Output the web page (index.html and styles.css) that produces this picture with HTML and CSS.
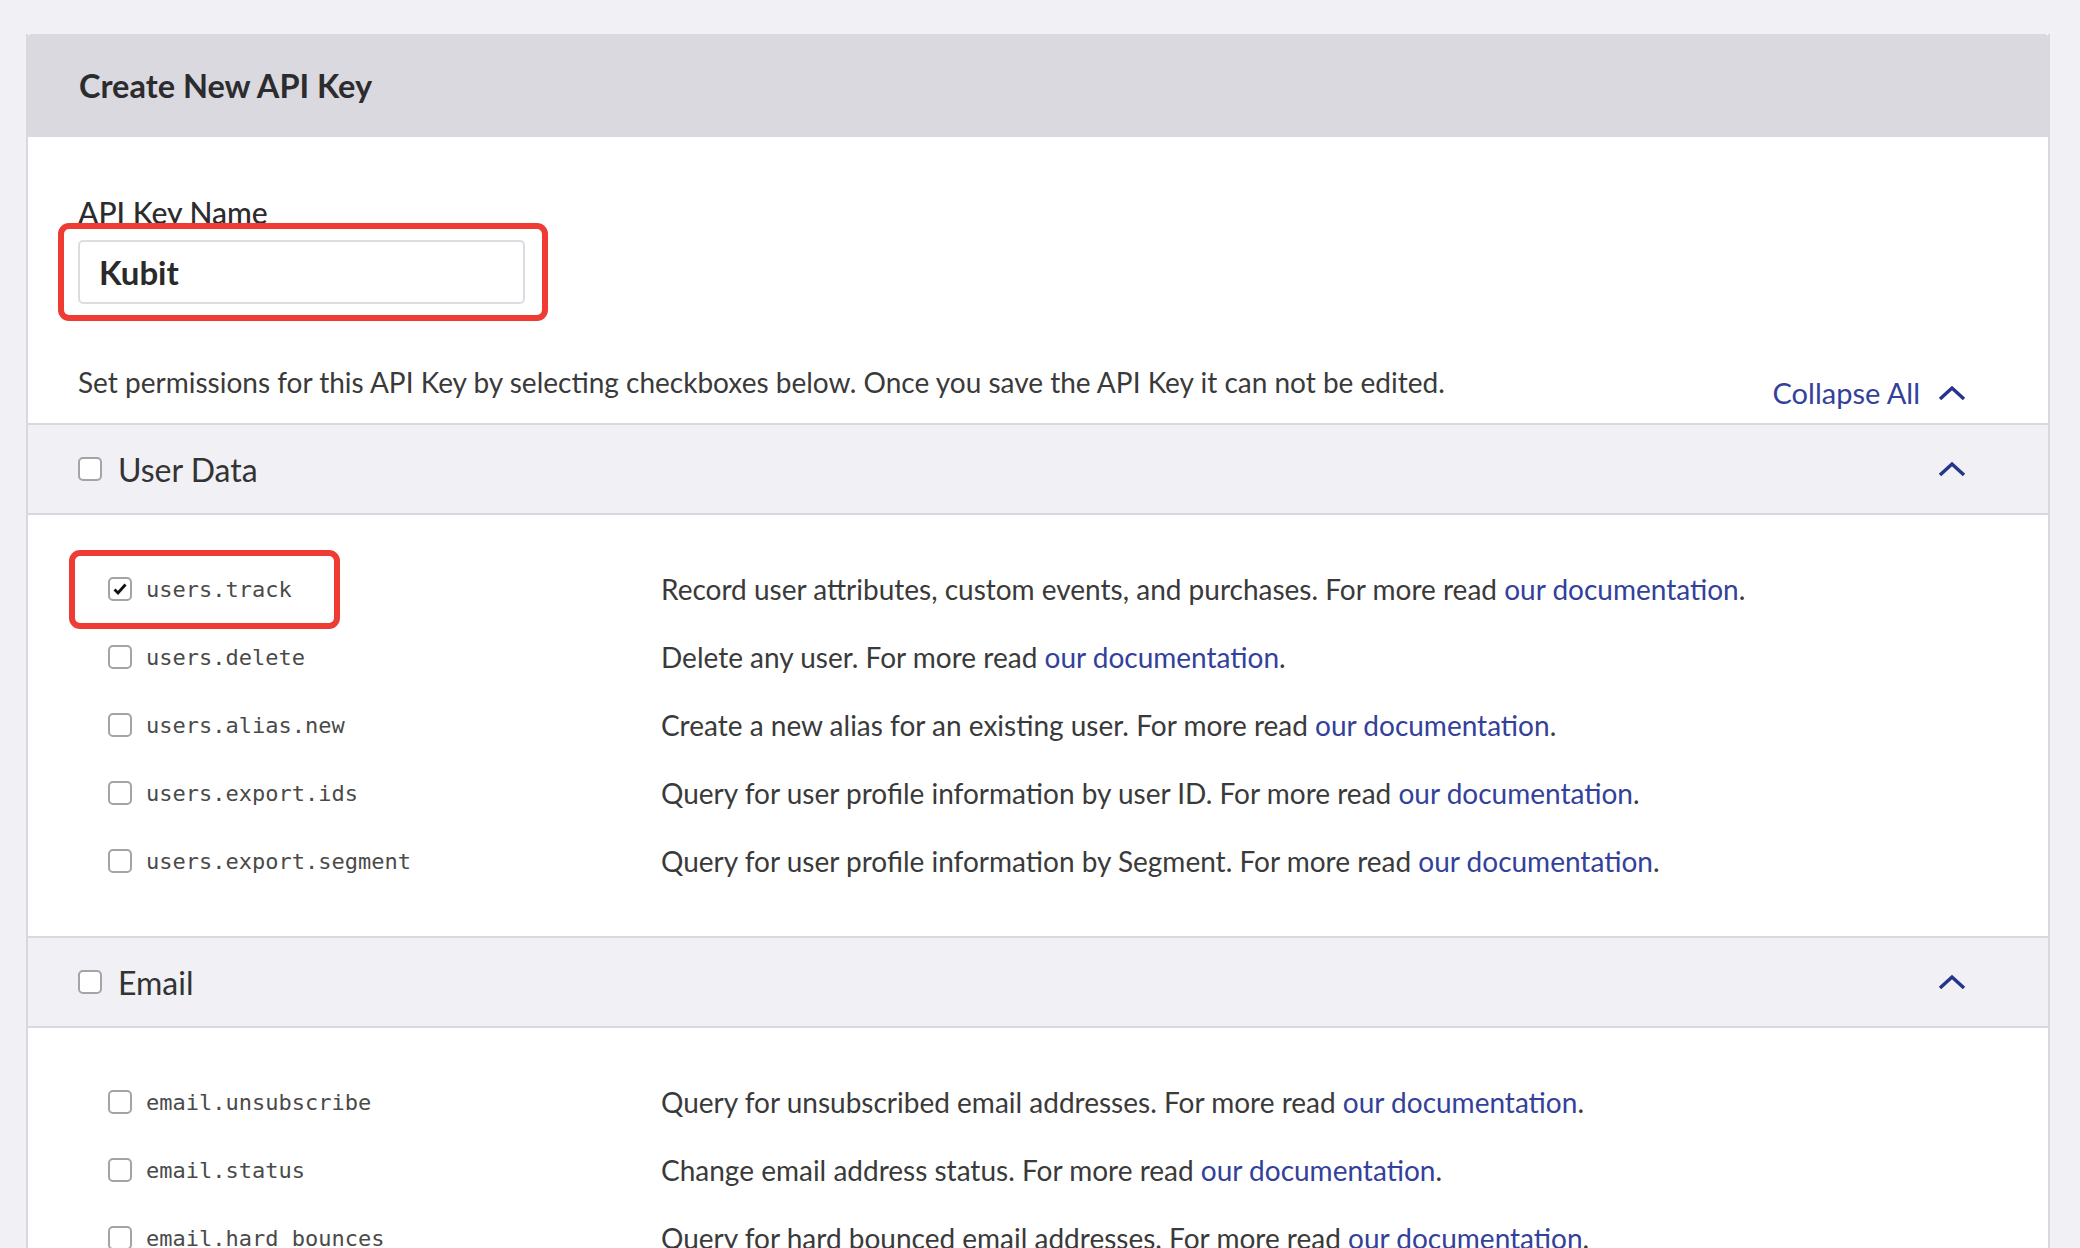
FILE: index.html
```html
<!DOCTYPE html>
<html lang="en">
<head>
<meta charset="utf-8">
<title>Create New API Key</title>
<link rel="stylesheet" href="styles.css">
</head>
<body>
<div class="card">
  <div class="card-head"><h1 class="title">Create New API Key</h1></div>
  <div class="intro">
    <label class="field-label">API Key Name</label>
    <div class="input-wrap">
      <div class="input">Kubit</div>
      <span class="mark mark-input"></span>
    </div>
    <div class="intro-foot">
      <p class="hint">Set permissions for this API Key by selecting checkboxes below. Once you save the API Key it can not be edited.</p>
      <a class="collapse-all">Collapse All
        <svg class="chev" viewBox="0 0 28 16" width="28" height="16"><polyline points="2,14 14,3 26,14"/></svg>
      </a>
    </div>
  </div>

  <div class="sec-head">
    <span class="cb"></span><span class="sec-title">User Data</span>
    <svg class="chev sec-chev" viewBox="0 0 28 16" width="28" height="16"><polyline points="2,14 14,3 26,14"/></svg>
  </div>
  <div class="sec-body">
    <div class="row">
      <div class="perm"><span class="cb checked"><svg viewBox="0 0 16 16" width="16" height="16"><polyline points="2.5,8.5 6,12 13.5,3.5"/></svg></span><code>users.track</code><span class="mark mark-perm"></span></div>
      <p class="desc">Record user attributes, custom events, and purchases. For more read <a>our documentation</a>.</p>
    </div>
    <div class="row">
      <div class="perm"><span class="cb"></span><code>users.delete</code></div>
      <p class="desc">Delete any user. For more read <a>our documentation</a>.</p>
    </div>
    <div class="row">
      <div class="perm"><span class="cb"></span><code>users.alias.new</code></div>
      <p class="desc">Create a new alias for an existing user. For more read <a>our documentation</a>.</p>
    </div>
    <div class="row">
      <div class="perm"><span class="cb"></span><code>users.export.ids</code></div>
      <p class="desc">Query for user profile information by user ID. For more read <a>our documentation</a>.</p>
    </div>
    <div class="row">
      <div class="perm"><span class="cb"></span><code>users.export.segment</code></div>
      <p class="desc">Query for user profile information by Segment. For more read <a>our documentation</a>.</p>
    </div>
  </div>

  <div class="sec-head">
    <span class="cb"></span><span class="sec-title">Email</span>
    <svg class="chev sec-chev" viewBox="0 0 28 16" width="28" height="16"><polyline points="2,14 14,3 26,14"/></svg>
  </div>
  <div class="sec-body">
    <div class="row">
      <div class="perm"><span class="cb"></span><code>email.unsubscribe</code></div>
      <p class="desc">Query for unsubscribed email addresses. For more read <a>our documentation</a>.</p>
    </div>
    <div class="row">
      <div class="perm"><span class="cb"></span><code>email.status</code></div>
      <p class="desc">Change email address status. For more read <a>our documentation</a>.</p>
    </div>
    <div class="row">
      <div class="perm"><span class="cb"></span><code>email.hard_bounces</code></div>
      <p class="desc">Query for hard bounced email addresses. For more read <a>our documentation</a>.</p>
    </div>
  </div>
</div>
</body>
</html>
```
FILE: styles.css
```css
* { box-sizing: border-box; }
html, body { margin: 0; height: 100%; }
body {
  background: #f0f0f5;
  font-family: Lato, "Noto Sans", sans-serif;
  color: #3a3a3a;
  padding: 34px 30px 0 26px;
  overflow: hidden;
}
.card {
  background: #fff;
  border-left: 2px solid #d8d8de;
  border-right: 2px solid #d8d8de;
}
.card-head {
  background: #d9d9df;
  height: 103px;
  display: flex;
  align-items: center;
  padding-left: 51px;
  border-top-left-radius: 3px;
  border-top-right-radius: 3px;
}
.title {
  margin: 0;
  font-size: 32.5px;
  font-weight: 700;
  color: #2c2c2e;
}
.intro { padding: 58px 0 0 50px; }
.field-label {
  display: block;
  font-size: 30px;
  font-weight: 500;
  color: #2c2c2e;
  line-height: 34px;
}
.input-wrap {
  position: relative;
  width: 447px;
  margin-top: 11px;
}
.input {
  height: 64px;
  border: 2px solid #dcdce2;
  border-radius: 5px;
  padding-left: 19px;
  display: flex;
  align-items: center;
  font-size: 33px;
  font-weight: 700;
  color: #2a2a2a;
}
.mark {
  position: absolute;
  border: 6px solid #ee3b33;
  border-radius: 11px;
  pointer-events: none;
}
.mark-input { left: -20px; top: -17px; right: -23px; bottom: -17px; }
.intro-foot {
  display: flex;
  align-items: flex-start;
  justify-content: space-between;
  padding: 61px 82px 13px 0;
}
.hint { margin: 0; font-size: 28px; line-height: 34px; color: #3a3a3a; }
.collapse-all {
  display: flex;
  align-items: center;
  gap: 18px;
  font-size: 29px;
  color: #33419a;
  line-height: 34px;
  margin-top: 11px;
}
.chev { display: block; }
.chev polyline { fill: none; stroke: #27348b; stroke-width: 3.5; }
.sec-head {
  height: 92px;
  background: #f0f0f5;
  border-top: 2px solid #d8d8de;
  border-bottom: 2px solid #d8d8de;
  display: flex;
  align-items: center;
  padding: 0 82px 0 50px;
}
.sec-title { font-size: 32px; color: #333; margin-left: 16px; }
.sec-chev { margin-left: auto; }
.cb {
  width: 24px;
  height: 24px;
  border: 2px solid #a4a4a8;
  border-radius: 5px;
  background: #fff;
  display: inline-flex;
  align-items: center;
  justify-content: center;
  flex: none;
}
.cb svg polyline { fill: none; stroke: #111; stroke-width: 2.8; }
.sec-body { padding: 40px 0 41px 80px; }
.row {
  height: 68px;
  display: grid;
  grid-template-columns: 553px 1fr;
  align-items: center;
}
.perm {
  position: relative;
  display: flex;
  align-items: center;
  gap: 14px;
}
.perm code {
  font-family: "DejaVu Sans Mono", "Liberation Mono", monospace;
  font-size: 22px;
  color: #4a4a4a;
}
.mark-perm { left: -39px; top: -27px; width: 271px; bottom: -27px; }
.desc { margin: 0; font-size: 28px; color: #3a3a3a; }
.desc a { color: #33419a; }
```
